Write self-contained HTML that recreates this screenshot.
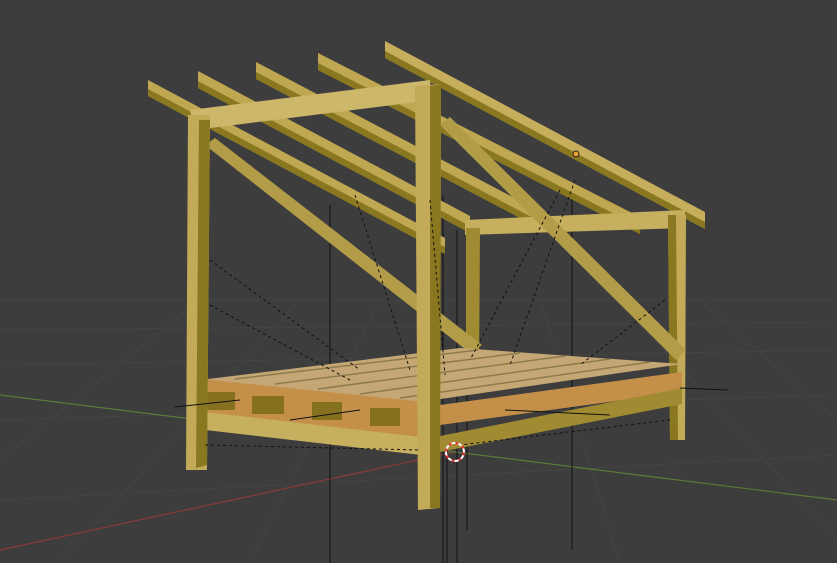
<!DOCTYPE html>
<html><head><meta charset="utf-8"><style>
html,body{margin:0;padding:0;background:#3d3d3d;overflow:hidden}
svg{display:block}
</style></head><body>
<svg width="837" height="563" viewBox="0 0 837 563" xmlns="http://www.w3.org/2000/svg">
<rect width="837" height="563" fill="#3d3d3d"/>
<g stroke="#444" stroke-width="1" fill="none">
<path d="M0 300 L837 300 M0 330 L837 322 M0 365 L837 350 M0 420 L837 395 M0 500 L837 455 M60 563 L300 300 M250 563 L380 300 M620 563 L540 300 M837 540 L620 300 M0 460 L200 300 M837 420 L700 300"/>
</g>
<path d="M0 550 L455 452" stroke="#8a3a3a" stroke-width="1.2"/>
<path d="M0 395 L455 452 L837 500" stroke="#5b7a35" stroke-width="1.2" fill="none"/>
<g stroke="#111" stroke-width="1">
<path d="M330 205 V563 M443 195 V563 M457 230 V563 M467 215 V530 M572 185 V550 M447 450 V563"/>
</g>
<!-- rafters -->
<g>
<polygon points="148,80 445,238 445,254 148,96" fill="#c0a852"/>
<polygon points="198,71 470,216 470,233 198,88" fill="#c0a852"/>
<polygon points="256,62 560,222 560,239 256,79" fill="#c0a852"/>
<polygon points="318,53 640,217 640,234 318,70" fill="#c0a852"/>
<polygon points="385,41 705,212 705,229 385,58" fill="#c6ae5c"/>
<g fill="#8a7820">
<polygon points="385,51 705,222 705,229 385,58"/>
<polygon points="148,89 445,247 445,254 148,96"/>
<polygon points="198,81 470,226 470,233 198,88"/>
<polygon points="256,72 560,232 560,239 256,79"/>
<polygon points="318,63 640,227 640,234 318,70"/>
</g>
</g>
<polygon points="465,220 685,210 685,228 465,235" fill="#c6af5e"/>
<polygon points="466,228 480,228 479,380 466,380" fill="#a08a32"/>
<polygon points="668,215 686,215 685,440 670,440" fill="#c2aa58"/>
<polygon points="668,215 676,215 678,440 670,440" fill="#8a7820"/>
<polygon points="205,145 215,138 482,345 470,353" fill="#b39c48"/>
<polygon points="440,125 450,117 686,350 676,360" fill="#b39c48"/>
<!-- deck -->
<polygon points="200,380 460,348 682,364 420,402" fill="#c4a775"/>
<g stroke="#8e7a4a" stroke-width="1.5">
<path d="M235,379 L478,350 M275,384 L520,353 M318,389 L565,356 M360,394 L610,359 M400,398 L650,362"/>
</g>
<polygon points="192,378 425,402 425,438 192,411" fill="#c48f48"/>
<g fill="#857020">
<rect x="205" y="392" width="30" height="18"/><rect x="252" y="396" width="32" height="18"/>
<rect x="312" y="402" width="30" height="18"/><rect x="370" y="408" width="30" height="18"/>
</g>
<polygon points="440,405 682,372 682,392 440,425" fill="#c48f48"/>
<polygon points="188,410 430,438 430,456 188,428" fill="#c6af5e"/>
<polygon points="440,436 682,388 682,404 440,452" fill="#a08a32"/>
<!-- front frame -->
<polygon points="190,110 430,80 432,100 195,130" fill="#cdb76a"/>
<polygon points="188,115 210,115 207,470 186,470" fill="#c2aa58"/>
<polygon points="199,120 210,120 207,465 196,468" fill="#8a7820"/>
<polygon points="415,86 441,84 440,508 418,510" fill="#c2aa58"/>
<polygon points="430,86 441,84 440,508 430,508" fill="#8a7820"/>
<g stroke="#111" stroke-width="1" stroke-dasharray="3,3" fill="none">
<path d="M210 260 L360 370 M210 305 L350 380 M355 195 L410 370 M430 200 L445 375 M575 180 L510 365 M665 300 L580 365 M205 445 L420 450 M670 420 L460 445 M560 190 L470 360"/>
</g>
<path d="M175 407 L240 400 M290 420 L360 410 M505 410 L610 415 M680 388 L728 390" stroke="#111" stroke-width="1"/>
<circle cx="455" cy="452" r="9" fill="none" stroke="#e33" stroke-width="2" stroke-dasharray="4,3"/>
<circle cx="455" cy="452" r="9" fill="none" stroke="#fff" stroke-width="2" stroke-dasharray="4,3" stroke-dashoffset="3.5"/>
<circle cx="576" cy="154" r="3" fill="#f0a030" stroke="#222" stroke-width="1"/>
</svg>
</body></html>
